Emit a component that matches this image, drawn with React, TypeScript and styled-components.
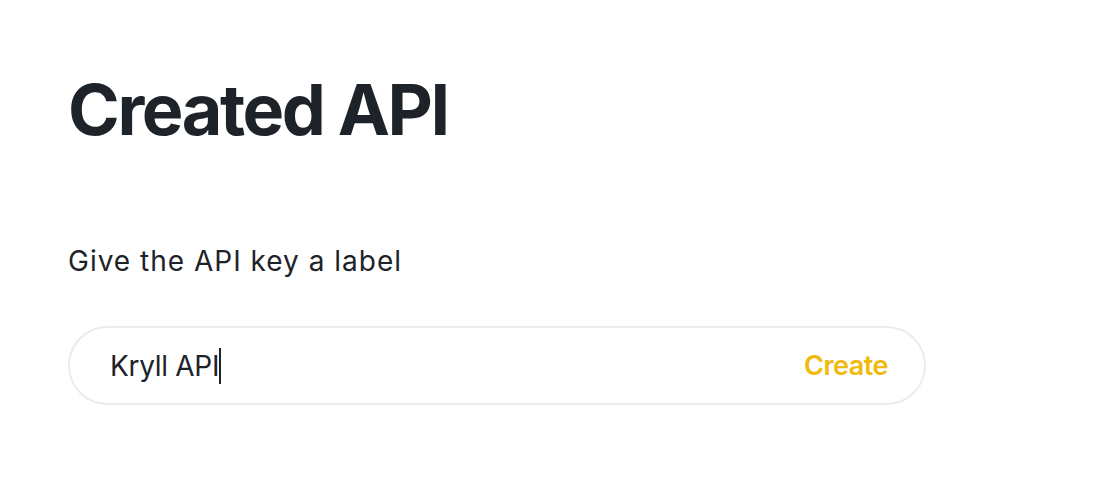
import React from "react";
import styled, { createGlobalStyle } from "styled-components";

const GlobalStyle = createGlobalStyle`
  html, body {
    margin: 0;
    padding: 0;
    background: #fff;
  }

  body {
    font-family: Inter, "Noto Sans", sans-serif;
    color: #1e2329;
  }
`;

const Page = styled.div`
  padding: 66px 68px 0;
  width: 858px;
`;

const Title = styled.h1`
  margin: 0;
  font-size: 70px;
  font-weight: 700;
  line-height: 88px;
  letter-spacing: -2.4px;
  color: #1e2329;
`;

const Label = styled.div`
  margin-top: 87px;
  font-size: 28px;
  line-height: 40px;
  letter-spacing: 1px;
  color: #1e2329;
`;

const Field = styled.div`
  margin-top: 45px;
  height: 79px;
  box-sizing: border-box;
  border: 2px solid #eaecef;
  border-radius: 40px;
  display: flex;
  align-items: center;
  justify-content: space-between;
  padding: 0 36px 0 40px;
`;

const Value = styled.div`
  display: flex;
  align-items: center;
  font-size: 28px;
  letter-spacing: -0.3px;
  color: #1e2329;
`;

const Caret = styled.span`
  display: inline-block;
  width: 2px;
  height: 36px;
  background: #1e2329;
`;

const CreateButton = styled.button`
  border: none;
  background: none;
  padding: 0;
  font-family: inherit;
  font-size: 27px;
  font-weight: 600;
  letter-spacing: -0.5px;
  color: #f0b90b;
  cursor: pointer;
`;

function App() {
  return (
    <>
      <GlobalStyle />
      <Page>
        <Title>Created API</Title>
        <Label>Give the API key a label</Label>
        <Field>
          <Value>
            Kryll API
            <Caret />
          </Value>
          <CreateButton type="button">Create</CreateButton>
        </Field>
      </Page>
    </>
  );
}

export default App;
